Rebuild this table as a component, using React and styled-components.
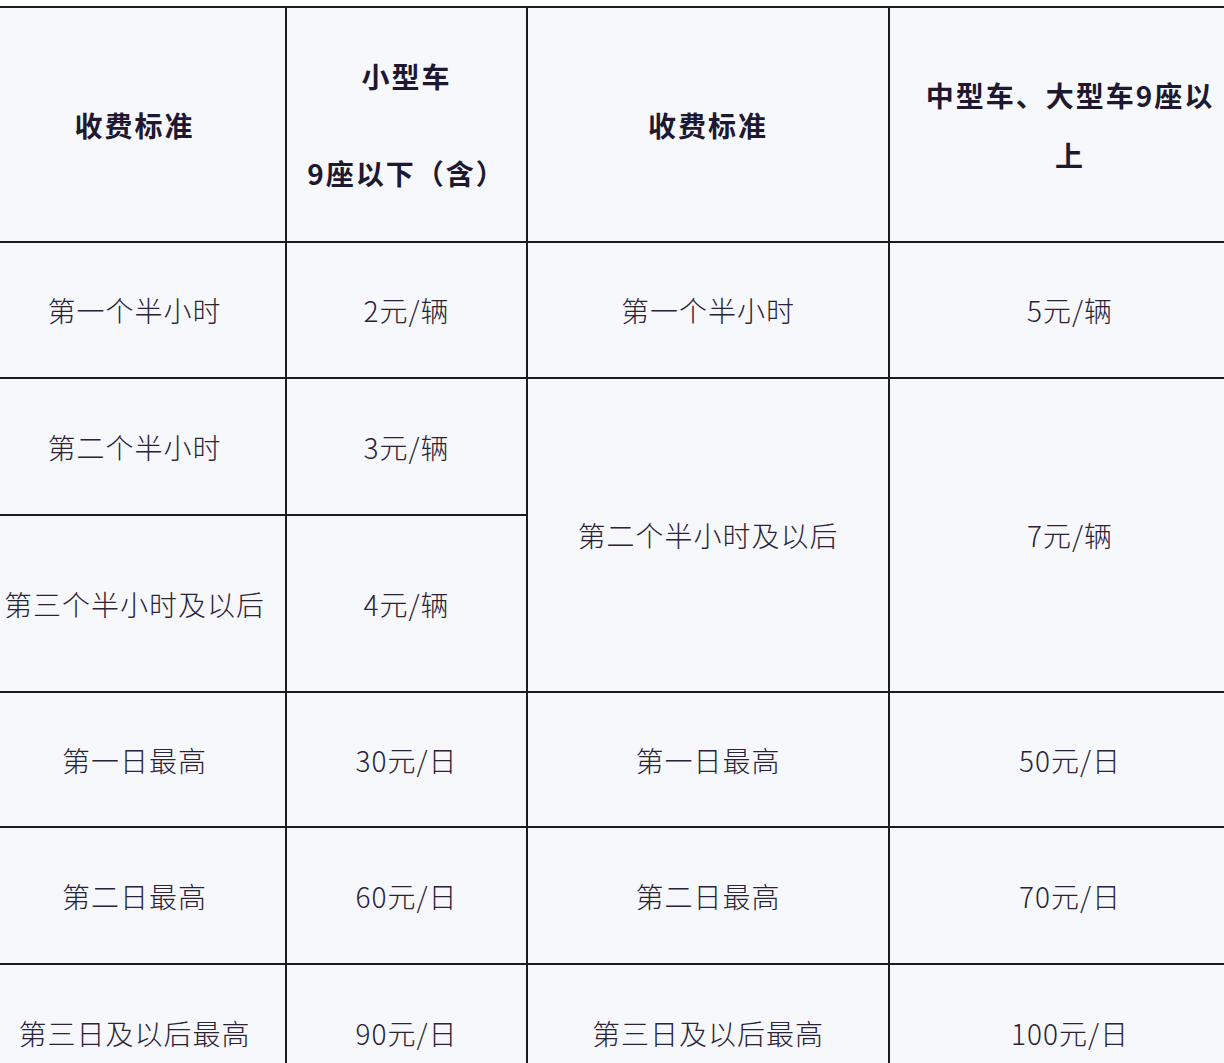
import React from "react";
import styled, { createGlobalStyle } from "styled-components";

const Global = createGlobalStyle`
  html, body { margin: 0; padding: 0; background: #ffffff; }
  body { font-family: "Noto Sans CJK SC", "Noto Sans", sans-serif; }
`;

const Viewport = styled.div`
  width: 1224px;
  height: 1063px;
  overflow: hidden;
  background: #fdfdfe;
  padding-top: 6px;
  box-sizing: border-box;
`;

const Grid = styled.div`
  display: grid;
  grid-template-columns: 303px 241px 362px 362px;
  grid-template-rows: 235px 136px 137px 177px 135px 137px 137px;
  margin-left: -16px;
  width: max-content;
  border-top: 2px solid #1b1b22;
  background: #f6f8fc;
`;

const Cell = styled.div`
  box-sizing: border-box;
  border-right: 2px solid #1b1b22;
  border-bottom: 2px solid #1b1b22;
  display: flex;
  flex-direction: column;
  align-items: center;
  justify-content: center;
  text-align: center;
  padding: 0 ${(p) => (p.$wrap ? "28px" : "12px")};
  grid-row: span ${(p) => p.$span || 1};
  color: ${(p) => (p.$head ? "#1e1830" : "#2a2236")};
  font-size: 28px;
  font-weight: ${(p) => (p.$head ? 700 : 300)};
  letter-spacing: ${(p) => (p.$head ? "2px" : "1px")};
  line-height: 60px;
  white-space: ${(p) => (p.$wrap ? "normal" : "nowrap")};
`;

const Line = styled.div`
  line-height: 1.3;
  & + & { margin-top: 60px; }
`;

export default function App() {
  return (
    <>
      <Global />
      <Viewport>
        <Grid>
          <Cell $head>收费标准</Cell>
          <Cell $head>
            <Line>小型车</Line>
            <Line>9座以下（含）</Line>
          </Cell>
          <Cell $head>收费标准</Cell>
          <Cell $head $wrap>中型车、大型车9座以上</Cell>

          <Cell>第一个半小时</Cell>
          <Cell>2元/辆</Cell>
          <Cell>第一个半小时</Cell>
          <Cell>5元/辆</Cell>

          <Cell>第二个半小时</Cell>
          <Cell>3元/辆</Cell>
          <Cell $span={2}>第二个半小时及以后</Cell>
          <Cell $span={2}>7元/辆</Cell>

          <Cell>第三个半小时及以后</Cell>
          <Cell>4元/辆</Cell>

          <Cell>第一日最高</Cell>
          <Cell>30元/日</Cell>
          <Cell>第一日最高</Cell>
          <Cell>50元/日</Cell>

          <Cell>第二日最高</Cell>
          <Cell>60元/日</Cell>
          <Cell>第二日最高</Cell>
          <Cell>70元/日</Cell>

          <Cell>第三日及以后最高</Cell>
          <Cell>90元/日</Cell>
          <Cell>第三日及以后最高</Cell>
          <Cell>100元/日</Cell>
        </Grid>
      </Viewport>
    </>
  );
}
